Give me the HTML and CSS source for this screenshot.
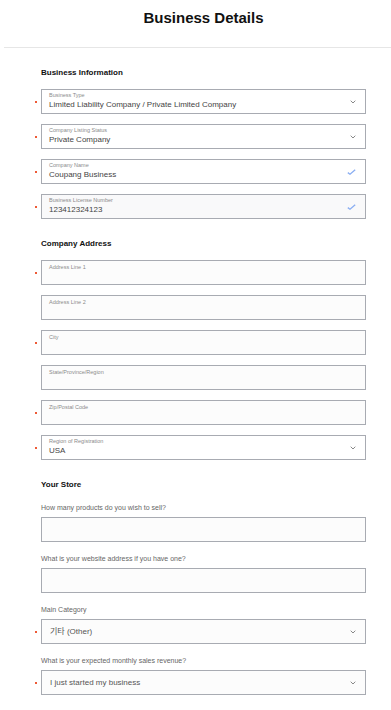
FILE: index.html
```html
<!DOCTYPE html>
<html lang="en">

<head>
    <link rel="stylesheet" href="styles.css">
</head>

<body>
    <header class="page-header">
        <h1>Business Details</h1>
    </header>

    <main class="form">
        <section class="form-section">
            <h2>Business Information</h2>

            <div class="field required">
                <div class="field__box">
                    <span class="field__label">Business Type</span>
                    <span class="field__value">Limited Liability Company / Private Limited Company</span>
                </div>
                <svg class="field__icon" viewBox="0 0 6 4" width="6" height="4"><path d="M.7.7 3 3 5.3.7" fill="none" stroke="#888" stroke-width="1"/></svg>
            </div>

            <div class="field required">
                <div class="field__box">
                    <span class="field__label">Company Listing Status</span>
                    <span class="field__value">Private Company</span>
                </div>
                <svg class="field__icon" viewBox="0 0 6 4" width="6" height="4"><path d="M.7.7 3 3 5.3.7" fill="none" stroke="#888" stroke-width="1"/></svg>
            </div>

            <div class="field required">
                <div class="field__box">
                    <span class="field__label">Company Name</span>
                    <span class="field__value">Coupang Business</span>
                </div>
                <svg class="field__icon" viewBox="0 0 9 6" width="9" height="6"><path d="M.8 3.6 3 5.2 8.2.8" fill="none" stroke="#8aaef2" stroke-width="1.3"/></svg>
            </div>

            <div class="field required field--filled">
                <div class="field__box">
                    <span class="field__label">Business License Number</span>
                    <span class="field__value">123412324123</span>
                </div>
                <svg class="field__icon" viewBox="0 0 9 6" width="9" height="6"><path d="M.8 3.6 3 5.2 8.2.8" fill="none" stroke="#8aaef2" stroke-width="1.3"/></svg>
            </div>
        </section>

        <section class="form-section">
            <h2>Company Address</h2>

            <div class="field required field--empty">
                <div class="field__box">
                    <span class="field__label">Address Line 1</span>
                </div>
            </div>

            <div class="field field--empty">
                <div class="field__box">
                    <span class="field__label">Address Line 2</span>
                </div>
            </div>

            <div class="field required field--empty">
                <div class="field__box">
                    <span class="field__label">City</span>
                </div>
            </div>

            <div class="field field--empty">
                <div class="field__box">
                    <span class="field__label">State/Province/Region</span>
                </div>
            </div>

            <div class="field required field--empty">
                <div class="field__box">
                    <span class="field__label">Zip/Postal Code</span>
                </div>
            </div>

            <div class="field required">
                <div class="field__box">
                    <span class="field__label">Region of Registration</span>
                    <span class="field__value">USA</span>
                </div>
                <svg class="field__icon" viewBox="0 0 6 4" width="6" height="4"><path d="M.7.7 3 3 5.3.7" fill="none" stroke="#888" stroke-width="1"/></svg>
            </div>
        </section>

        <section class="form-section">
            <h2>Your Store</h2>

            <p class="question">How many products do you wish to sell?</p>
            <div class="field field--plain"></div>

            <p class="question">What is your website address if you have one?</p>
            <div class="field field--plain"></div>

            <p class="question">Main Category</p>
            <div class="field field--plain required">
                <span class="field__value">기타 (Other)</span>
                <svg class="field__icon" viewBox="0 0 6 4" width="6" height="4"><path d="M.7.7 3 3 5.3.7" fill="none" stroke="#888" stroke-width="1"/></svg>
            </div>

            <p class="question">What is your expected monthly sales revenue?</p>
            <div class="field field--plain required">
                <span class="field__value">I just started my business</span>
                <svg class="field__icon" viewBox="0 0 6 4" width="6" height="4"><path d="M.7.7 3 3 5.3.7" fill="none" stroke="#888" stroke-width="1"/></svg>
            </div>
        </section>
    </main>
</body>

</html>
```

FILE: styles.css
```css
*,
*::after,
*::before {
    box-sizing: border-box;
}

body {
    margin: 0;
    background: #fff;
    font-family: "Liberation Sans", Arial, "Noto Sans CJK KR", sans-serif;
    color: #333;
}

.page-header {
    height: 48px;
    margin-left: 4px;
    border-bottom: 1px solid #e6e6e6;
    display: flex;
    justify-content: center;
    align-items: center;
    padding: 0 0 12px 12px;
}

.page-header h1 {
    margin: 0;
    font-size: 15px;
    font-weight: bold;
    color: #111;
}

.form {
    width: 366px;
    padding: 20px 0 0 41px;
}

.form-section {
    display: flex;
    flex-direction: column;
    margin-bottom: 20px;
}

.form-section h2 {
    margin: 0 0 11px;
    font-size: 8px;
    line-height: 10px;
    font-weight: bold;
    color: #111;
}

.field {
    position: relative;
    height: 25px;
    border: 1px solid #a8abb2;
    background: #fff;
    display: flex;
    align-items: center;
    padding: 0 9px 0 7px;
    margin-bottom: 10px;
}

.field:last-child {
    margin-bottom: 0;
}

/* required marker, sits left of the box */
.field.required::before {
    content: "";
    position: absolute;
    left: -7px;
    top: 50%;
    width: 2px;
    height: 2px;
    margin-top: -1px;
    background: #ee5a36;
}

.field--empty {
    background: #fcfcfc;
}

.field--filled {
    background: #f9f9fa;
}

.field__box {
    flex: 1;
    display: flex;
    flex-direction: column;
    align-self: stretch;
    padding-top: 2px;
}

.field__label {
    font-size: 5.5px;
    line-height: 7px;
    color: #8b8b8b;
}

.field--empty .field__label {
    padding-top: 1px;
}

.field__value {
    font-size: 8px;
    line-height: 11px;
    color: #444;
}

.field--plain {
    padding-left: 8px;
    margin-bottom: 0;
    background: #fcfcfc;
}

.field--plain .field__value {
    flex: 1;
    color: #555;
}

.field__icon {
    flex: none;
}

.question {
    margin: 12px 0 5px;
    font-size: 7px;
    line-height: 9px;
    color: #666;
}

.form-section h2 + .question {
    margin-top: 2px;
}
```
